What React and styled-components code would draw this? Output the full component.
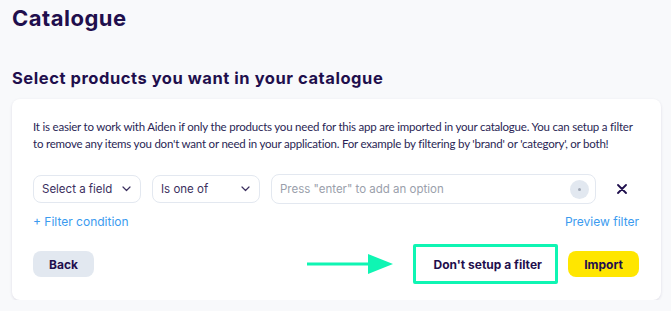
import React from "react";
import styled, { createGlobalStyle } from "styled-components";

const Global = createGlobalStyle`
  html, body { margin: 0; padding: 0; background: #f8f9fb; }
  body { font-family: Inter, "Noto Sans", sans-serif; color: #1f0f4d; }
  * { box-sizing: border-box; }
`;

const Page = styled.div`
  padding: 4px 10px 0 12px;
  width: 671px;
`;

const Title = styled.h1`
  margin: 0;
  font-family: Inter, sans-serif;
  font-size: 22px;
  font-weight: 700;
  line-height: 28px;
  letter-spacing: 0.5px;
  color: #1f0f4d;
`;

const Subtitle = styled.h2`
  margin: 35px 0 0;
  font-family: Inter, sans-serif;
  font-size: 16.5px;
  font-weight: 700;
  line-height: 22px;
  letter-spacing: 0.55px;
  color: #1f0f4d;
`;

const Card = styled.div`
  margin-top: 10px;
  width: 649px;
  background: #fff;
  border-radius: 8px;
  box-shadow: 0 1px 3px rgba(30, 20, 70, 0.12);
  padding: 19px 22px 16px 21px;
`;

const Intro = styled.p`
  margin: 0;
  font-family: Lato, sans-serif;
  font-size: 11.5px;
  line-height: 17px;
  letter-spacing: -0.21px;
  white-space: nowrap;
  color: #2a1f55;
`;

const FilterRow = styled.div`
  display: flex;
  align-items: center;
  gap: 11px;
  margin-top: 22px;
`;

const Select = styled.div`
  width: 108px;
  height: 28px;
  border: 1px solid #e3e8f0;
  border-radius: 8px;
  display: flex;
  align-items: center;
  justify-content: space-between;
  padding: 0 9px 0 8px;
  font-size: 11.5px;
  color: #3b2f5e;
`;

const InputBox = styled.div`
  width: 325px;
  height: 30px;
  border: 1px solid #e3e8f0;
  border-radius: 8px;
  display: flex;
  align-items: center;
  justify-content: space-between;
  padding: 0 6px 0 8px;
  font-size: 11.5px;
  color: #9aa0ab;
`;

const ClearDot = styled.span`
  width: 19px;
  height: 19px;
  border-radius: 50%;
  background: #e2e8f0;
  display: flex;
  align-items: center;
  justify-content: center;
  &::after {
    content: "";
    width: 3px;
    height: 3px;
    border-radius: 50%;
    background: #a0a8b5;
  }
`;

const CloseButton = styled.span`
  margin-left: 10px;
  display: flex;
  align-items: center;
`;

const LinkRow = styled.div`
  display: flex;
  justify-content: space-between;
  margin-top: 10px;
`;

const Link = styled.span`
  font-size: 12px;
  color: #3b9bef;
  line-height: 16px;
`;

const Actions = styled.div`
  display: flex;
  align-items: center;
  margin-top: 14px;
`;

const Button = styled.button`
  font-family: Inter, sans-serif;
  font-weight: 700;
  font-size: 12px;
  color: #1f0f4d;
  border: none;
  border-radius: 8px;
  height: 26px;
  white-space: nowrap;
  padding: 0 ${(p) => (p.$px === undefined ? 16 : p.$px)}px;
  background: ${(p) => p.$bg || "transparent"};
  cursor: pointer;
`;

const Spacer = styled.div`
  flex: 1;
`;

const Highlight = styled.div`
  border: 3px solid #0ff5b3;
  border-radius: 2px;
  height: 40px;
  width: 145px;
  display: flex;
  align-items: center;
  justify-content: center;
  padding-left: 4px;
  margin: 0 10px 0 20px;
`;

const Arrow = styled.svg`
  display: block;
`;

const Chevron = () => (
  <svg width="9" height="6" viewBox="0 0 9 6" fill="none">
    <path d="M1 1l3.5 3.5L8 1" stroke="#3b2f5e" strokeWidth="1.2" strokeLinecap="round" strokeLinejoin="round" />
  </svg>
);

export default function App() {
  return (
    <>
      <Global />
      <Page>
        <Title>Catalogue</Title>
        <Subtitle>Select products you want in your catalogue</Subtitle>
        <Card>
          <Intro>
            It is easier to work with Aiden if only the products you need for this app are imported in your catalogue. You can setup a filter
            <br />
            to remove any items you don't want or need in your application. For example by filtering by 'brand' or 'category', or both!
          </Intro>
          <FilterRow>
            <Select>
              Select a field <Chevron />
            </Select>
            <Select>
              Is one of <Chevron />
            </Select>
            <InputBox>
              Press "enter" to add an option
              <ClearDot />
            </InputBox>
            <CloseButton>
              <svg width="10" height="10" viewBox="0 0 10 10">
                <path d="M1 1l8 8M9 1l-8 8" stroke="#1f0f4d" strokeWidth="1.8" strokeLinecap="round" />
              </svg>
            </CloseButton>
          </FilterRow>
          <LinkRow>
            <Link>+ Filter condition</Link>
            <Link>Preview filter</Link>
          </LinkRow>
          <Actions>
            <Button $bg="#e2e8f0" $px={16}>Back</Button>
            <Spacer />
            <Arrow width="86" height="22" viewBox="0 0 86 22">
              <path d="M0 11h62" stroke="#0ff5b3" strokeWidth="3" />
              <path d="M61 1l25 10-25 10z" fill="#0ff5b3" />
            </Arrow>
            <Highlight>
              <Button $px={0}>Don't setup a filter</Button>
            </Highlight>
            <Button $bg="#ffe600" $px={16}>Import</Button>
          </Actions>
        </Card>
      </Page>
    </>
  );
}
